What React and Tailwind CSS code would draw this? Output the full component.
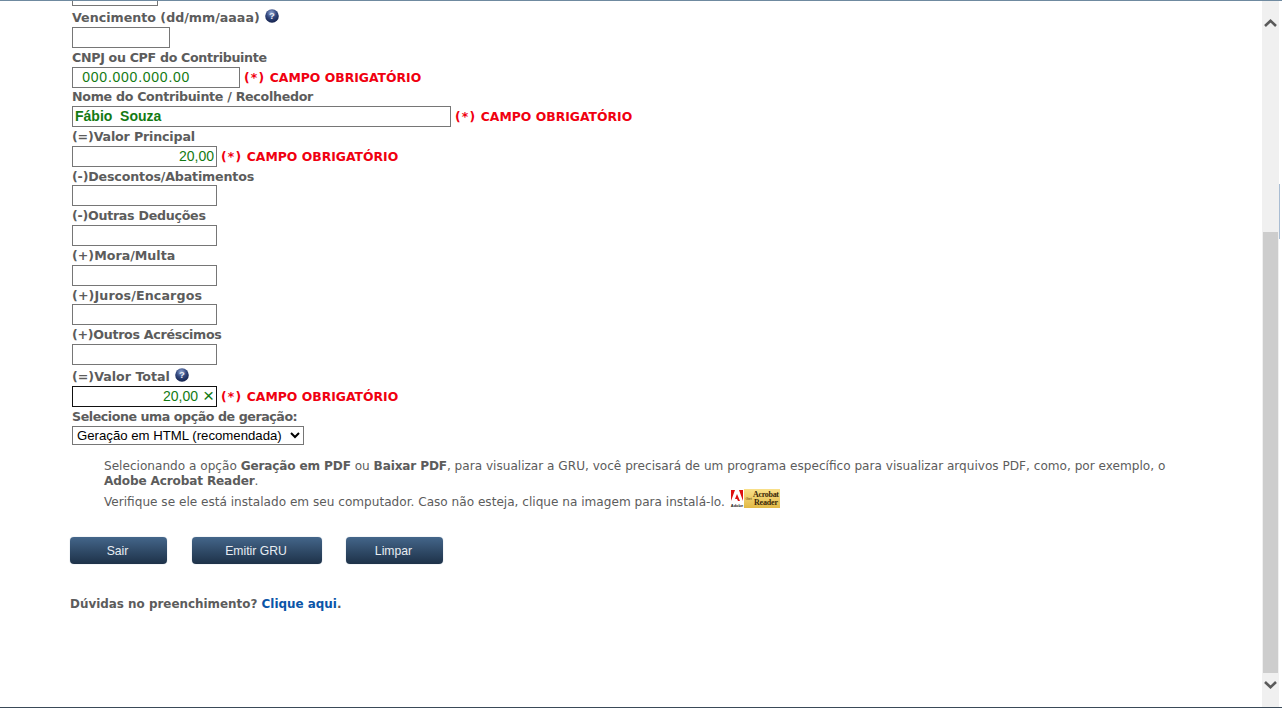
const labelCls = "flex items-center h-[18px] text-[12.65px] font-bold text-[#5c5c5c] whitespace-nowrap";
const inputBase = "block h-[21px] border bg-white px-[2px] text-[14px] text-[#137a13] outline-none";
const req = (
  <span className="ml-[4px] pt-[2px] text-[12.4px] font-bold text-[#f00010] whitespace-nowrap">
    <span className="tracking-[1.2px]">(*)</span> CAMPO OBRIGATÓRIO
  </span>
);
const font = { fontFamily: '"DejaVu Sans", Verdana, sans-serif' };
const arial = '"Liberation Sans", Arial, sans-serif';

function Help() {
  return (
    <svg width="14" height="14" viewBox="0 0 14 14" className="ml-[5px] -translate-y-[2px] shrink-0">
      <defs>
        <radialGradient id="hb" cx="45%" cy="28%" r="72%">
          <stop offset="0%" stopColor="#93a8d4" />
          <stop offset="50%" stopColor="#34497f" />
          <stop offset="100%" stopColor="#14224d" />
        </radialGradient>
      </defs>
      <circle cx="7" cy="7" r="6.8" fill="url(#hb)" />
      <text x="7" y="10.3" textAnchor="middle" fontSize="9.5" fontWeight="700" fill="#e8ecf5" fontFamily="Liberation Sans">?</text>
    </svg>
  );
}

function Row({ label, help, mt = 0, w = 145, value = "", required, font2 = "", active, x, gap = 0, ls = "" }) {
  return (
    <div style={{ marginTop: mt }}>
      <div className={`${labelCls} ${ls}`} style={{ marginBottom: gap }}>
        {label}
        {help && <Help />}
      </div>
      <div className="flex items-center">
        <div className="relative">
          <input
            readOnly
            value={value}
            style={{ width: w, fontFamily: arial }}
            className={`${inputBase} ${font2} ${active ? "border-[#111111]" : "border-[#767676]"}`}
          />
          {x && <span className="absolute right-[3px] top-[1px] text-[19px] leading-[18px] text-[#137a13]" style={{ fontFamily: arial }}>×</span>}
        </div>
        {required && req}
      </div>
    </div>
  );
}

function Btn({ w, children, ml = 0 }) {
  return (
    <button
      style={{ width: w, marginLeft: ml, fontFamily: arial }}
      className="h-[27px] rounded-[4px] bg-gradient-to-b from-[#44668a] to-[#1e3249] pr-[2px] pt-[2px] text-[12.2px] text-[#e8edf2] shadow-[0_0_1px_#8ea1b5]"
    >
      {children}
    </button>
  );
}

function Acrobat() {
  return (
    <svg width="50" height="19" viewBox="0 0 50 19" className="ml-[5px] shrink-0 -translate-y-[4px]">
      <defs>
        <linearGradient id="ag" x1="0" y1="0" x2="0" y2="1">
          <stop offset="0%" stopColor="#f9e08a" />
          <stop offset="100%" stopColor="#e2b945" />
        </linearGradient>
      </defs>
      <rect width="50" height="19" fill="url(#ag)" />
      <rect width="14" height="19" fill="#ffffff" />
      <path d="M1 12 L5 1 L1 1 Z M13 12 L9 1 L13 1 Z M7 5 L10 12 L8 12 L7 10 L5 10 Z" fill="#dd1111" />
      <text x="7" y="17.5" textAnchor="middle" fontSize="4" fontWeight="700" fill="#222" fontFamily="Liberation Sans">Adobe</text>
      <text x="15.5" y="11" fontSize="4" fill="#5a3b10" fontFamily="Liberation Sans">Get</text>
      <text x="23" y="8" fontSize="8" fontWeight="700" fill="#3a2708" fontFamily="Liberation Serif" textLength="26">Acrobat</text>
      <text x="24" y="16" fontSize="8" fontWeight="700" fill="#3a2708" fontFamily="Liberation Serif" textLength="24">Reader</text>
    </svg>
  );
}

export default function App() {
  return (
    <div className="flex h-[708px] w-[1282px] flex-col overflow-hidden bg-white" style={font}>
      <div className="h-px shrink-0 bg-[#6f8aa0]" />
      <div className="flex min-h-0 flex-1">
        <main className="w-[1262px] shrink-0 overflow-hidden pl-[70px]">
          <div className="pl-[2px]">
            <div className="h-[5px] w-[86px] border border-t-0 border-[#767676]" />
            <Row label="Vencimento (dd/mm/aaaa)" help w={98} mt={3} />
            <Row label="CNPJ ou CPF do Contribuinte" mt={1} w={168} value="  000.000.000.00" required font2="tracking-[0.75px] !pl-0" ls="tracking-[-0.33px]" />
            <Row label="Nome do Contribuinte / Recolhedor" w={379} value="Fábio  Souza" required font2="font-bold" ls="tracking-[-0.3px]" />
            <Row label="(=)Valor Principal" mt={1} w={145} value="20,00" required font2="text-right" ls="tracking-[-0.17px]" />
            <Row label="(-)Descontos/Abatimentos" mt={1} gap={-1} w={145} ls="tracking-[-0.17px]" />
            <Row label="(-)Outras Deduções" mt={1} w={145} ls="tracking-[-0.28px]" />
            <Row label="(+)Mora/Multa" mt={1} w={145} />
            <Row label="(+)Juros/Encargos" mt={1} gap={-1} w={145} ls="tracking-[0.12px]" />
            <Row label="(+)Outros Acréscimos" mt={1} w={145} ls="tracking-[-0.3px]" />
            <Row label="(=)Valor Total" help mt={3} w={145} value="20,00" required font2="text-right !pr-[18px]" active x />
            <div className="mt-[1px] flex h-[18px] items-center text-[12.65px] font-bold tracking-[-0.45px] text-[#5c5c5c]">Selecione uma opção de geração:</div>
            <select
              style={{ fontFamily: arial }}
              className="block h-[19px] w-[232px] border border-[#767676] bg-white text-[13.2px] leading-[16px] text-black"
              defaultValue="html"
            >
              <option value="html">Geração em HTML (recomendada)</option>
            </select>
          </div>
          <div className="mt-[14px] w-[1100px] pl-[34px] text-[12.1px] leading-[15px] text-[#5c5c5c]">
            <p>
              Selecionando a opção <b className="tracking-[-0.15px]">Geração em PDF</b> ou <b className="tracking-[-0.15px]">Baixar PDF</b>, para visualizar a GRU, você precisará de um programa específico para visualizar arquivos PDF, como, por exemplo, o <b className="tracking-[-0.15px]">Adobe Acrobat Reader</b>.
            </p>
            <div className="mt-[4px] flex h-[19px] items-center">
              <span>Verifique se ele está instalado em seu computador. Caso não esteja, clique na imagem para instalá-lo.</span>
              <Acrobat />
            </div>
          </div>
          <div className="mt-[25px] flex">
            <Btn w={97}>Sair</Btn>
            <Btn w={130} ml={25}>Emitir GRU</Btn>
            <Btn w={97} ml={24}>Limpar</Btn>
          </div>
          <p className="mt-[32px] text-[11.93px] font-bold text-[#5c5c5c]">
            Dúvidas no preenchimento? <a className="text-[#0b55a8]">Clique aqui</a>.
          </p>
        </main>
        <aside className="flex w-[17px] shrink-0 flex-col items-center bg-[#f0f0f0]">
          <svg width="13" height="8" viewBox="0 0 13 8" className="mt-[18px] shrink-0">
            <path d="M1 7 L6.5 1.8 L12 7" fill="none" stroke="#5a5a5a" strokeWidth="2.6" />
          </svg>
          <div className="mt-[205px] h-[441px] w-[15px] shrink-0 bg-[#cdcdcd]" />
          <svg width="13" height="8" viewBox="0 0 13 8" className="mt-[8px] shrink-0">
            <path d="M1 1 L6.5 6.2 L12 1" fill="none" stroke="#5a5a5a" strokeWidth="2.6" />
          </svg>
        </aside>
        <div className="flex-1">
          <div className="mt-[183px] h-[55px] w-px bg-[#a9bdd3]" />
        </div>
      </div>
      <div className="h-px shrink-0 bg-[#3a4a58]" />
    </div>
  );
}
